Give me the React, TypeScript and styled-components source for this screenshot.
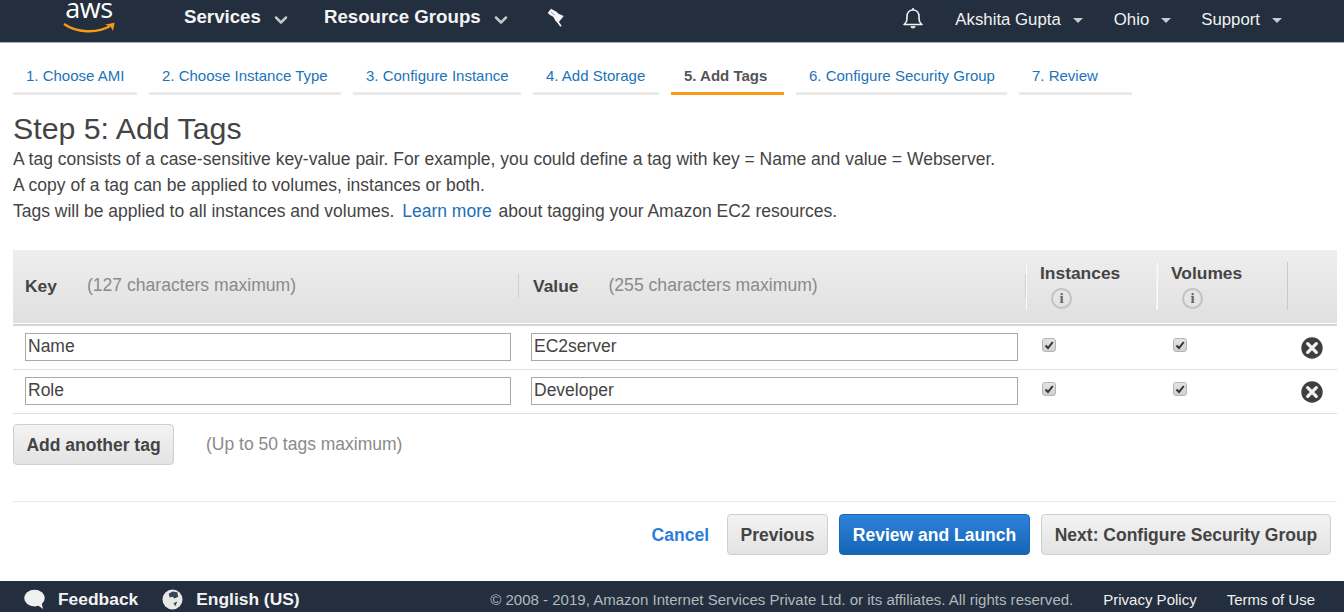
import React from "react";
import styled, { createGlobalStyle } from "styled-components";
import { ChevronDown } from "lucide-react";

const GlobalStyle = createGlobalStyle`
  html, body {
    margin: 0;
    padding: 0;
    background: #fff;
    font-family: "Liberation Sans", Arial, sans-serif;
    color: #444;
  }
`;

const Page = styled.div`
  width: 1344px;
  height: 612px;
  display: flex;
  flex-direction: column;
  overflow: hidden;
`;

const TopBar = styled.header`
  height: 42px;
  flex: none;
  display: flex;
  align-items: center;
  padding-right: 62px;
  background: #232f3e;
  border-bottom: 1px solid #aab0b6;
  color: #fff;
`;

const LogoWrap = styled.div`
  width: 52px;
  margin-left: 63px;
  height: 42px;
  flex: none;
  display: flex;
  flex-direction: column;
  align-items: center;
`;

const LogoText = styled.span`
  font-family: "Open Sans", sans-serif;
  font-size: 27px;
  line-height: 14px;
  height: 14px;
  margin: 1px 0 7px;
  letter-spacing: -0.4px;
  color: #fff;
`;

const ServiceLink = styled.span<{ $left: number }>`
  display: flex;
  align-items: center;
  margin-left: ${(p) => p.$left}px;
  margin-top: -8px;
  font-size: 18.7px;
  font-weight: 700;
  color: #f4f4f4;
`;

const Chevron = styled(ChevronDown)`
  margin-left: 10px;
  margin-top: 5px;
  color: #c4c7ca;
`;

const PinIcon = styled.svg`
  margin-left: 36px;
  margin-top: -7px;
`;

const BellIcon = styled.svg`
  margin-top: -6px;
`;

const Spacer = styled.div`
  flex: 1;
`;

const UserLink = styled.span<{ $left: number }>`
  display: flex;
  align-items: center;
  margin-left: ${(p) => p.$left}px;
  margin-top: -3px;
  font-size: 16.8px;
  color: #f2f2f2;
  &::after {
    content: "";
    margin-left: 12px;
    margin-top: 1px;
    border-left: 5px solid transparent;
    border-right: 5px solid transparent;
    border-top: 5px solid #c8cacc;
  }
`;

const Wizard = styled.nav`
  display: flex;
  gap: 12px;
  padding: 21px 0 0 13px;
  height: 31px;
  flex: none;
`;

const Step = styled.a<{ $active?: boolean; $width: number }>`
  box-sizing: border-box;
  width: ${(p) => p.$width}px;
  height: 31px;
  padding-left: 13px;
  font-size: 15px;
  line-height: 24px;
  white-space: nowrap;
  color: ${(p) => (p.$active ? "#555" : "#2173b8")};
  font-weight: ${(p) => (p.$active ? 700 : 400)};
  border-bottom: 3px solid ${(p) => (p.$active ? "#f79a17" : "#eaeaea")};
`;

const Content = styled.main`
  flex: 1;
  padding: 0 7px 0 13px;
`;

const Title = styled.h1`
  margin: 16px 0 0;
  font-size: 30.3px;
  line-height: 35px;
  font-weight: 400;
  color: #444;
`;

const Description = styled.p`
  margin: 0;
  font-size: 17.5px;
  line-height: 26px;
  color: #444;
`;

const InlineLink = styled.a`
  color: #1b6fb5;
  margin: 0 2px 0 3px;
`;

const TagTable = styled.section`
  margin-top: 26px;
`;

const tableColumns = "506px 507px 131px 131px 49px";

const HeadRow = styled.div`
  box-sizing: border-box;
  height: 73px;
  padding-bottom: 2px;
  display: grid;
  grid-template-columns: ${tableColumns};
  align-items: center;
  background: linear-gradient(#eeeeee, #e0e0e0);
`;

const HeadCell = styled.div<{ $inset: number }>`
  box-sizing: border-box;
  height: 24px;
  padding-left: ${(p) => p.$inset}px;
  border-right: 1px solid #cfcfcf;
  display: flex;
  align-items: center;
  color: #444;
`;

const StackedHeadCell = styled.div<{ $rule: string }>`
  box-sizing: border-box;
  height: 48px;
  padding-left: 13px;
  border-left: 1px solid #fafafa;
  border-right: 1px solid ${(p) => p.$rule};
  display: flex;
  flex-direction: column;
  align-items: flex-start;
  color: #444;
`;

const HeadLabel = styled.strong`
  font-size: 17.4px;
  line-height: 22px;
`;

const HeadHint = styled.span`
  margin-left: 30px;
  font-size: 17.6px;
  color: #8a8a8a;
`;

const InfoBadge = styled.span`
  box-sizing: border-box;
  width: 21px;
  height: 21px;
  margin: 4px 0 0 11px;
  display: flex;
  align-items: center;
  justify-content: center;
  border: 2px solid #c2c2c2;
  border-radius: 50%;
  font-family: "Liberation Serif", serif;
  font-size: 15px;
  font-weight: 700;
  color: #666;
`;

const BodyRow = styled.div<{ $first?: boolean }>`
  box-sizing: border-box;
  height: ${(p) => (p.$first ? 46 : 44)}px;
  display: grid;
  grid-template-columns: ${tableColumns};
  align-items: start;
  padding-top: 7px;
  border-top: ${(p) => (p.$first ? "2px solid #d5d5d5" : "none")};
  margin-top: ${(p) => (p.$first ? 1 : 0)}px;
  border-bottom: 1px solid #dedede;
`;

const InputCell = styled.div`
  padding-left: 12px;
`;

const TextField = styled.input<{ $width: number }>`
  box-sizing: border-box;
  display: block;
  width: ${(p) => p.$width}px;
  height: 28px;
  padding: 0 2px 2px;
  border: 1px solid #a9a9a9;
  background: #fff;
  font-family: "Liberation Sans", Arial, sans-serif;
  font-size: 17.5px;
  color: #444;
  outline: none;
`;

const CheckCell = styled.div`
  padding: 5px 0 0 16px;
`;

const CheckBox = styled.span`
  box-sizing: border-box;
  width: 14px;
  height: 14px;
  display: flex;
  align-items: center;
  justify-content: center;
  background: linear-gradient(#e4e4e4, #d0d0d0);
  border: 1px solid #b5b5b5;
  border-radius: 3px;
`;

const RemoveCell = styled.div`
  display: flex;
  padding: 4px 0 0 13px;
`;

const AddRow = styled.div`
  display: flex;
  align-items: center;
  margin-top: 10px;
`;

const Button = styled.button<{ $primary?: boolean; $width: number }>`
  box-sizing: border-box;
  width: ${(p) => p.$width}px;
  height: 41px;
  padding: 1px 0 0;
  border-radius: 4px;
  border: 1px solid ${(p) => (p.$primary ? "#1a68b3" : "#cfcfcf")};
  background: ${(p) =>
    p.$primary
      ? "linear-gradient(#2d83da, #1565b6)"
      : "linear-gradient(#f3f3f3, #e3e3e3)"};
  color: ${(p) => (p.$primary ? "#fff" : "#444")};
  font-family: "Liberation Sans", Arial, sans-serif;
  font-size: 17.5px;
  font-weight: 700;
  white-space: nowrap;
`;

const AddHint = styled.span`
  margin-left: 32px;
  font-size: 17.5px;
  color: #8a8a8a;
`;

const ActionBar = styled.div`
  margin-top: 36px;
  padding: 12px 6px 0 0;
  border-top: 1px solid #e8e8e8;
  display: flex;
  align-items: center;
  justify-content: flex-end;
  gap: 11px;
`;

const CancelLink = styled.a`
  margin: 1px 7px 0 0;
  font-size: 17.5px;
  font-weight: 700;
  color: #2b7ddb;
`;

const Footer = styled.footer`
  box-sizing: border-box;
  height: 31px;
  flex: none;
  display: flex;
  align-items: center;
  padding: 5px 29px 0 24px;
  background: #232f3e;
`;

const FooterStrong = styled.span`
  margin: 0 24px 0 13px;
  font-size: 17.4px;
  font-weight: 700;
  color: #f4f4f4;
`;

const Copyright = styled.span`
  font-size: 15.04px;
  color: #b4b8bd;
`;

const FooterLink = styled.span`
  margin-left: 30px;
  font-size: 15px;
  color: #f0f0f0;
`;

const CheckMark = () => (
  <svg width="10" height="10" viewBox="0 0 10 10">
    <path d="M1.5 5.5 L4 8 L8.8 2" fill="none" stroke="#333" strokeWidth="2" />
  </svg>
);

const RemoveIcon = () => (
  <svg width="22" height="22" viewBox="0 0 23 23">
    <circle cx="11.5" cy="11.5" r="11.2" fill="#3f3f3f" />
    <path
      d="M7 7 L16 16 M16 7 L7 16"
      stroke="#f4f4f4"
      strokeWidth="3.4"
      strokeLinecap="round"
    />
  </svg>
);

const steps = [
  { label: "1. Choose AMI", width: 124 },
  { label: "2. Choose Instance Type", width: 192 },
  { label: "3. Configure Instance", width: 168 },
  { label: "4. Add Storage", width: 126 },
  { label: "5. Add Tags", width: 113, active: true },
  { label: "6. Configure Security Group", width: 211 },
  { label: "7. Review", width: 113 },
];

const tags = [
  { key: "Name", value: "EC2server" },
  { key: "Role", value: "Developer" },
];

export default function App() {
  return (
    <Page>
      <GlobalStyle />
      <TopBar>
        <LogoWrap>
          <LogoText>aws</LogoText>
          <svg width="52" height="12" viewBox="0 0 52 12">
            <path
              d="M1 2 C13 10.5 34 12 47 4"
              fill="none"
              stroke="#f79a17"
              strokeWidth="2.4"
            />
            <path d="M42 2.6 L51.6 0.7 L50 9 L47.6 4.4 Z" fill="#f79a17" />
          </svg>
        </LogoWrap>
        <ServiceLink $left={69}>
          Services
          <Chevron size={20} strokeWidth={3} />
        </ServiceLink>
        <ServiceLink $left={33}>
          Resource Groups
          <Chevron size={20} strokeWidth={3} />
        </ServiceLink>
        <PinIcon width="18" height="19" viewBox="0 0 18 19">
          <path
            d="M0.7 5 L4 0.7 L9 3.5 L12 6 L16.7 8 L11 15 L8.5 13 L6.5 9 L3 7 Z"
            fill="#f6f6f6"
          />
          <path d="M4 4 L7.5 7" stroke="#8b929b" strokeWidth="1" />
          <path d="M10.5 13.5 L14 18.3" stroke="#f6f6f6" strokeWidth="1.7" />
        </PinIcon>
        <Spacer />
        <BellIcon width="22" height="22" viewBox="0 0 22 22" fill="none">
          <path
            d="M2 17.5 C5 15 5 13 5 9.5 C5 5.5 7.5 3 11 3 C14.5 3 17 5.5 17 9.5 C17 13 17 15 20 17.5 Z"
            stroke="#f2f2f2"
            strokeWidth="1.6"
            strokeLinejoin="round"
          />
          <path d="M11 1 V3" stroke="#f2f2f2" strokeWidth="1.6" />
          <path d="M8.5 19 A2.5 2.5 0 0 0 13.5 19 Z" fill="#d8d8d8" />
        </BellIcon>
        <UserLink $left={31}>Akshita Gupta</UserLink>
        <UserLink $left={31}>Ohio</UserLink>
        <UserLink $left={30}>Support</UserLink>
      </TopBar>

      <Wizard>
        {steps.map((step) => (
          <Step key={step.label} $active={step.active} $width={step.width}>
            {step.label}
          </Step>
        ))}
      </Wizard>

      <Content>
        <Title>Step 5: Add Tags</Title>
        <Description>
          A tag consists of a case-sensitive key-value pair. For example, you
          could define a tag with key = Name and value = Webserver.
        </Description>
        <Description>
          A copy of a tag can be applied to volumes, instances or both.
        </Description>
        <Description>
          Tags will be applied to all instances and volumes.{" "}
          <InlineLink>Learn more</InlineLink> about tagging your Amazon EC2
          resources.
        </Description>

        <TagTable>
          <HeadRow>
            <HeadCell $inset={12}>
              <HeadLabel>Key</HeadLabel>
              <HeadHint>(127 characters maximum)</HeadHint>
            </HeadCell>
            <HeadCell $inset={14}>
              <HeadLabel>Value</HeadLabel>
              <HeadHint>(255 characters maximum)</HeadHint>
            </HeadCell>
            <StackedHeadCell $rule="#f0f0f0">
              <HeadLabel>Instances</HeadLabel>
              <InfoBadge>i</InfoBadge>
            </StackedHeadCell>
            <StackedHeadCell $rule="#c9c9c9">
              <HeadLabel>Volumes</HeadLabel>
              <InfoBadge>i</InfoBadge>
            </StackedHeadCell>
            <div />
          </HeadRow>
          {tags.map((tag, index) => (
            <BodyRow key={tag.key} $first={index === 0}>
              <InputCell>
                <TextField $width={486} defaultValue={tag.key} />
              </InputCell>
              <InputCell>
                <TextField $width={487} defaultValue={tag.value} />
              </InputCell>
              <CheckCell>
                <CheckBox>
                  <CheckMark />
                </CheckBox>
              </CheckCell>
              <CheckCell>
                <CheckBox>
                  <CheckMark />
                </CheckBox>
              </CheckCell>
              <RemoveCell>
                <RemoveIcon />
              </RemoveCell>
            </BodyRow>
          ))}
        </TagTable>

        <AddRow>
          <Button $width={161}>Add another tag</Button>
          <AddHint>(Up to 50 tags maximum)</AddHint>
        </AddRow>

        <ActionBar>
          <CancelLink>Cancel</CancelLink>
          <Button $width={101}>Previous</Button>
          <Button $primary $width={191}>
            Review and Launch
          </Button>
          <Button $width={290}>Next: Configure Security Group</Button>
        </ActionBar>
      </Content>

      <Footer>
        <svg width="21" height="21" viewBox="0 0 22 22">
          <ellipse cx="11" cy="9.5" rx="10.8" ry="8.8" fill="#f0f0f0" />
          <path d="M13 16 L20 21 L18 13 Z" fill="#f0f0f0" />
        </svg>
        <FooterStrong>Feedback</FooterStrong>
        <svg width="21" height="21" viewBox="0 0 22 22">
          <circle cx="11" cy="11" r="10.5" fill="#e8e8e8" />
          <path
            d="M7 5 L11 2.5 L16 3.5 L17 8 L13 10 L11 8 L8 9 Z M12 15 L16 13 L14 18 Z"
            fill="#3a4552"
          />
        </svg>
        <FooterStrong>English (US)</FooterStrong>
        <Spacer />
        <Copyright>
          © 2008 - 2019, Amazon Internet Services Private Ltd. or its
          affiliates. All rights reserved.
        </Copyright>
        <FooterLink>Privacy Policy</FooterLink>
        <FooterLink>Terms of Use</FooterLink>
      </Footer>
    </Page>
  );
}
